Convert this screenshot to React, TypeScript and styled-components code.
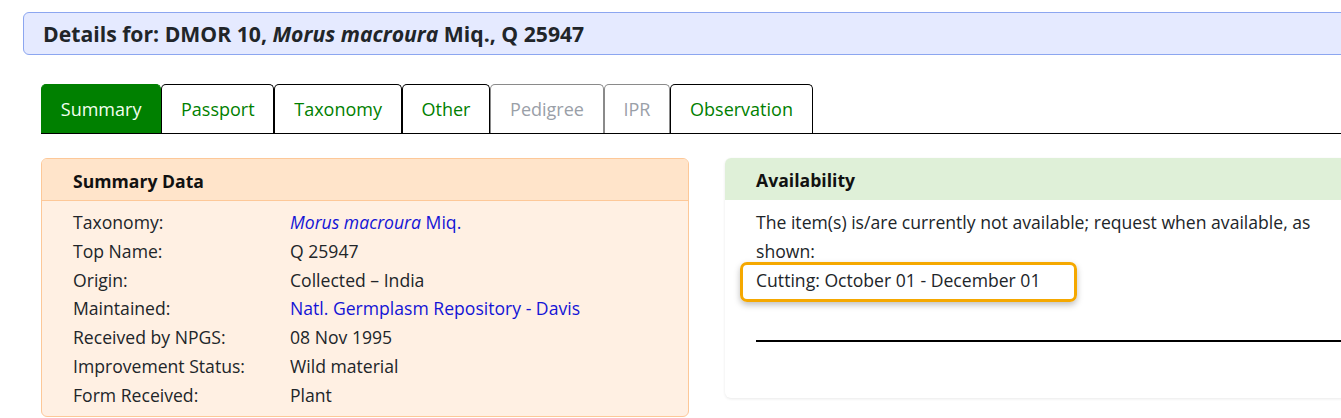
import React from "react";
import styled, { createGlobalStyle } from "styled-components";

const GlobalStyle = createGlobalStyle`
  html, body {
    margin: 0;
    padding: 0;
    background: #ffffff;
    overflow: hidden;
  }
  body {
    font-family: "Segoe UI", "Open Sans", "Noto Sans", sans-serif;
    font-size: 17.6px;
    color: #212529;
  }
`;

const Page = styled.div`
  width: 1368px;
  margin-left: 23px;
  padding-top: 12px;
`;

const TitleBar = styled.h1`
  margin: 0;
  height: 43px;
  box-sizing: border-box;
  display: flex;
  align-items: center;
  padding: 0 19px;
  background: #e5eaff;
  border: 1px solid #8ca6f0;
  border-radius: 6px;
  font-size: 21.2px;
  font-weight: 700;
  color: #212529;
  white-space: pre;
`;

const Content = styled.div`
  padding: 29px 18px 0 18px;
`;

const TabList = styled.div`
  display: flex;
  border-bottom: 1px solid #000;
`;

const Tab = styled.div<{ $active?: boolean; $disabled?: boolean }>`
  height: 49px;
  box-sizing: border-box;
  display: flex;
  align-items: center;
  padding: 0 18.8px;
  font-size: 18px;
  border: 1px solid ${(p) => (p.$active ? "#008000" : p.$disabled ? "#8a8a8a" : "#000")};
  border-bottom: none;
  border-radius: 5px 5px 0 0;
  background: ${(p) => (p.$active ? "#008000" : "#fff")};
  color: ${(p) => (p.$active ? "#f4fff0" : p.$disabled ? "#9aa0a8" : "#008000")};
`;

const Cards = styled.div`
  display: grid;
  grid-template-columns: 648px 648px;
  column-gap: 36px;
  align-items: start;
  margin-top: 24px;
`;

const Card = styled.section<{ $tone: "peach" | "plain" }>`
  border-radius: 6px;
  overflow: hidden;
  border: ${(p) => (p.$tone === "peach" ? "1px solid #fdc898" : "none")};
  background: ${(p) => (p.$tone === "peach" ? "#fff0e3" : "#fff")};
  box-shadow: ${(p) => (p.$tone === "plain" ? "0 1px 3px rgba(0,0,0,0.09)" : "none")};
`;

const CardHeader = styled.div<{ $bg: string; $border?: string }>`
  height: 42px;
  box-sizing: border-box;
  display: flex;
  align-items: center;
  padding: 2px 0 0 31px;
  font-weight: 700;
  font-size: 17.6px;
  color: #111;
  background: ${(p) => p.$bg};
  border-bottom: ${(p) => (p.$border ? `1px solid ${p.$border}` : "none")};
`;

const SummaryBody = styled.div`
  display: grid;
  grid-template-columns: 217px 1fr;
  padding: 7px 31px 6px;
  line-height: 28.8px;
`;

const Label = styled.div``;
const Value = styled.div``;

const Link = styled.a`
  color: #1414d6;
  text-decoration: none;
`;

const AvailBody = styled.div`
  padding: 8px 31px 56px;
  line-height: 29px;
`;

const Para = styled.p`
  margin: 0;
`;

const Highlight = styled.div`
  display: inline-block;
  margin: -4px 0 0 -16px;
  padding: 1px 34px 4px 13px;
  border: 3px solid #f5a800;
  border-radius: 7px;
  box-shadow: 0 3px 6px rgba(0, 0, 0, 0.25);
  line-height: 29px;
`;

const Rule = styled.hr`
  margin: 38px 0 0 0;
  border: none;
  border-top: 2px solid #000;
  height: 0;
`;

const rows: [string, React.ReactNode][] = [
  [
    "Taxonomy:",
    <Link href="#">
      <i>Morus macroura</i> Miq.
    </Link>,
  ],
  ["Top Name:", "Q 25947"],
  ["Origin:", "Collected \u2013 India"],
  ["Maintained:", <Link href="#">Natl. Germplasm Repository - Davis</Link>],
  ["Received by NPGS:", "08 Nov 1995"],
  ["Improvement Status:", "Wild material"],
  ["Form Received:", "Plant"],
];

const tabs: { label: string; active?: boolean; disabled?: boolean }[] = [
  { label: "Summary", active: true },
  { label: "Passport" },
  { label: "Taxonomy" },
  { label: "Other" },
  { label: "Pedigree", disabled: true },
  { label: "IPR", disabled: true },
  { label: "Observation" },
];

export default function App() {
  return (
    <>
      <GlobalStyle />
      <Page>
        <TitleBar>
          Details for: DMOR 10, <i>Morus macroura</i> Miq., Q 25947
        </TitleBar>
        <Content>
          <TabList>
            {tabs.map((t) => (
              <Tab key={t.label} $active={t.active} $disabled={t.disabled}>
                {t.label}
              </Tab>
            ))}
          </TabList>
          <Cards>
            <Card $tone="peach">
              <CardHeader $bg="#ffe4ca" $border="#fdc898">
                Summary Data
              </CardHeader>
              <SummaryBody>
                {rows.map(([l, v]) => (
                  <React.Fragment key={l}>
                    <Label>{l}</Label>
                    <Value>{v}</Value>
                  </React.Fragment>
                ))}
              </SummaryBody>
            </Card>
            <Card $tone="plain">
              <CardHeader $bg="#dff0d8">Availability</CardHeader>
              <AvailBody>
                <Para>
                  The item(s) is/are currently not available; request when available, as
                  shown:
                </Para>
                <Highlight>Cutting: October 01 - December 01</Highlight>
                <Rule />
              </AvailBody>
            </Card>
          </Cards>
        </Content>
      </Page>
    </>
  );
}
